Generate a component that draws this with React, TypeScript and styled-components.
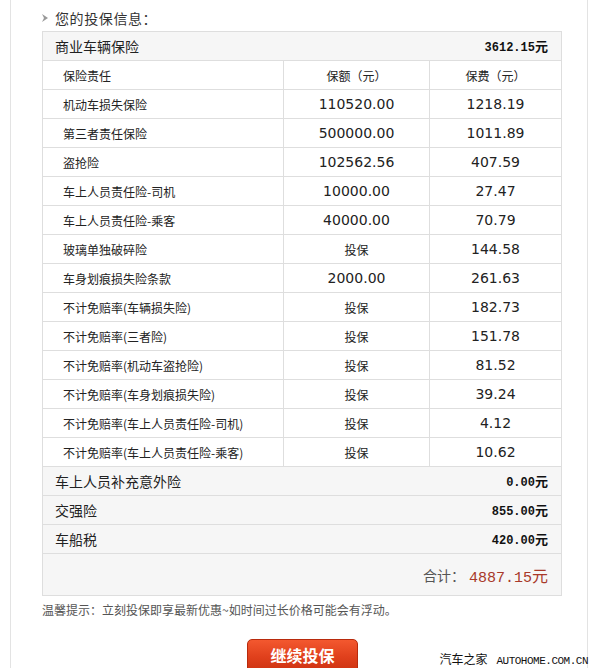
import React from "react";
import styled, { createGlobalStyle } from "styled-components";

const GlobalStyle = createGlobalStyle`
  html, body { margin: 0; padding: 0; background: #fff; }
  body { font-family: "Noto Sans CJK SC", "DejaVu Sans", sans-serif; color: #333; }
`;

const CJK = `"Noto Sans CJK SC", sans-serif`;
const NUM = `"DejaVu Sans", "Noto Sans CJK SC", sans-serif`;
const MONO = `"Liberation Mono", "Noto Sans CJK SC", monospace`;

const Frame = styled.div`
  position: relative;
  margin-left: 10px;
  width: 578px;
  height: 668px;
  box-sizing: border-box;
  border-left: 1px solid #e3e3e3;
  border-right: 1px solid #e3e3e3;
  padding: 7px 0 0 31px;
`;

const Title = styled.div`
  display: flex;
  align-items: center;
  gap: 7px;
  height: 22px;
  font-family: ${CJK};
  font-size: 14px;
  letter-spacing: 0.6px;
  color: #333;
  margin-bottom: 2px;
`;

const Table = styled.div`
  width: 520px;
  box-sizing: border-box;
  border: 1px solid #dedede;
  border-bottom: none;
`;

const Section = styled.div`
  display: flex;
  justify-content: space-between;
  align-items: center;
  padding: 0 13px 1px 12px;
  box-sizing: content-box;
  height: 27px;
  background: #f6f6f6;
  border-bottom: 1px solid #dedede;
`;

const SectionName = styled.span`
  font-family: ${CJK};
  font-size: 14px;
  color: #222;
`;

const Amount = styled.span`
  font-family: ${MONO};
  font-weight: bold;
  font-size: 12px;
  color: #111;
  & > em { font-style: normal; font-family: ${CJK}; font-size: 13px; }
`;

const Row = styled.div`
  display: grid;
  grid-template-columns: 240px 146px 1fr;
  height: 29px;
  background: #fff;
  border-bottom: 1px solid #dedede;
  box-sizing: border-box;
`;

const Cell = styled.div<{ $left?: boolean; $num?: boolean }>`
  display: flex;
  align-items: center;
  justify-content: ${(p) => (p.$left ? "flex-start" : "center")};
  padding-left: ${(p) => (p.$left ? "20px" : "0")};
  border-left: ${(p) => (p.$left ? "none" : "1px solid #dedede")};
  font-family: ${(p) => (p.$num ? NUM : CJK)};
  font-size: ${(p) => (p.$num ? "14px" : "12px")};
  color: #222;
  white-space: nowrap;
`;

const Total = styled.div`
  display: flex;
  justify-content: flex-end;
  align-items: center;
  height: 41px;
  padding-right: 13px;
  background: #f6f6f6;
  border-bottom: 1px solid #dedede;
  gap: 4px;
`;

const TotalLabel = styled.span`
  font-family: ${CJK};
  font-size: 14px;
  color: #555;
`;

const TotalValue = styled.span`
  font-family: ${MONO};
  font-size: 15px;
  color: #a8392a;
  & > em { font-style: normal; font-family: ${CJK}; font-size: 16px; }
`;

const Tip = styled.div`
  margin-top: 5px;
  font-family: ${CJK};
  font-size: 12px;
  color: #555;
  height: 18px;
  line-height: 18px;
`;

const ButtonRow = styled.div`
  display: flex;
  padding-left: 205px;
  margin-top: 20px;
`;

const Button = styled.button`
  width: 111px;
  height: 36px;
  border: 1px solid #b82a0c;
  border-radius: 5px;
  background: linear-gradient(#f3582f, #e0401c 50%, #c9300f);
  color: #fff;
  font-family: ${CJK};
  font-weight: bold;
  font-size: 16px;
  padding: 0 0 4px;
`;

const Watermark = styled.div`
  position: absolute;
  right: -1px;
  bottom: 1px;
  display: flex;
  align-items: baseline;
  gap: 9px;
  font-family: ${CJK};
  font-size: 12px;
  color: #111;
  & > span {
    font-family: "Liberation Mono", monospace;
    font-size: 11px;
    letter-spacing: -0.5px;
  }
`;

const rows: [string, string, string][] = [
  ["机动车损失保险", "110520.00", "1218.19"],
  ["第三者责任保险", "500000.00", "1011.89"],
  ["盗抢险", "102562.56", "407.59"],
  ["车上人员责任险-司机", "10000.00", "27.47"],
  ["车上人员责任险-乘客", "40000.00", "70.79"],
  ["玻璃单独破碎险", "投保", "144.58"],
  ["车身划痕损失险条款", "2000.00", "261.63"],
  ["不计免赔率(车辆损失险)", "投保", "182.73"],
  ["不计免赔率(三者险)", "投保", "151.78"],
  ["不计免赔率(机动车盗抢险)", "投保", "81.52"],
  ["不计免赔率(车身划痕损失险)", "投保", "39.24"],
  ["不计免赔率(车上人员责任险-司机)", "投保", "4.12"],
  ["不计免赔率(车上人员责任险-乘客)", "投保", "10.62"],
];

const extras: [string, string][] = [
  ["车上人员补充意外险", "0.00"],
  ["交强险", "855.00"],
  ["车船税", "420.00"],
];

const isNum = (s: string) => /^[0-9.]+$/.test(s);

export default function App() {
  return (
    <>
      <GlobalStyle />
      <Frame>
        <Title>
          <svg width="6" height="8" viewBox="0 0 6 8">
            <path d="M0 0 L6 4 L0 8 L2 4 Z" fill="#999" />
          </svg>
          您的投保信息：
        </Title>
        <Table>
          <Section>
            <SectionName>商业车辆保险</SectionName>
            <Amount>3612.15<em>元</em></Amount>
          </Section>
          <Row>
            <Cell $left>保险责任</Cell>
            <Cell>保额（元）</Cell>
            <Cell>保费（元）</Cell>
          </Row>
          {rows.map(([n, a, f]) => (
            <Row key={n}>
              <Cell $left>{n}</Cell>
              <Cell $num={isNum(a)}>{a}</Cell>
              <Cell $num>{f}</Cell>
            </Row>
          ))}
          {extras.map(([n, v]) => (
            <Section key={n}>
              <SectionName>{n}</SectionName>
              <Amount>{v}<em>元</em></Amount>
            </Section>
          ))}
          <Total>
            <TotalLabel>合计：</TotalLabel>
            <TotalValue>4887.15<em>元</em></TotalValue>
          </Total>
        </Table>
        <Tip>温馨提示：立刻投保即享最新优惠~如时间过长价格可能会有浮动。</Tip>
        <ButtonRow>
          <Button>继续投保</Button>
        </ButtonRow>
        <Watermark>汽车之家<span>AUTOHOME.COM.CN</span></Watermark>
      </Frame>
    </>
  );
}
